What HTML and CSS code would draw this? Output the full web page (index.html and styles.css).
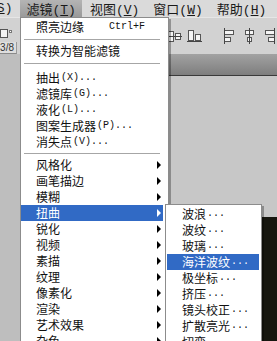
FILE: index.html
```html
<!DOCTYPE html>
<html lang="zh-CN">
  <head>
    <meta charset="UTF-8" />
    <title>滤镜菜单</title>
    <link rel="stylesheet" href="styles.css">
  </head>
  <body>
    <div class="app">
      <div class="menubar">
        <span class="mb-item mb-cut">(<u>S</u>)</span>
        <span class="mb-item active">滤镜<span class="key">(<u>T</u>)</span></span>
        <span class="mb-item">视图<span class="key">(<u>V</u>)</span></span>
        <span class="mb-item">窗口<span class="key">(<u>W</u>)</span></span>
        <span class="mb-item">帮助<span class="key">(<u>H</u>)</span></span>
      </div>

      <div class="toolbar">
        <div class="tb-left">
          <svg class="tb-mini" viewBox="0 0 12 10">
            <rect x="0.5" y="0.5" width="7" height="8" fill="#f2f2f2" stroke="#555" />
            <rect x="9.5" y="1.5" width="2" height="2" fill="#fff" stroke="#777" />
          </svg>
          <div class="field">3/8</div>
        </div>
        <div class="tb-right">
          <svg class="tb-icon" viewBox="0 0 15 16">
            <rect x="1.5" y="3.5" width="5" height="10" fill="#f4f4f4" stroke="#555" />
            <rect x="8.5" y="5.5" width="5" height="6" fill="#f4f4f4" stroke="#555" />
            <path d="M0 8.5h15" stroke="#444" />
          </svg>
          <svg class="tb-icon" viewBox="0 0 15 16">
            <rect x="1.5" y="2.5" width="5" height="10" fill="#f4f4f4" stroke="#555" />
            <rect x="8.5" y="6.5" width="5" height="6" fill="#f4f4f4" stroke="#555" />
            <path d="M0 13.5h15" stroke="#444" />
          </svg>
          <span class="tb-gap"></span>
          <svg class="tb-icon" viewBox="0 0 15 16">
            <rect x="2.5" y="2.5" width="9" height="4" fill="#f4f4f4" stroke="#555" />
            <rect x="2.5" y="9.5" width="6" height="4" fill="#f4f4f4" stroke="#555" />
            <path d="M2.5 0v16" stroke="#444" />
          </svg>
          <svg class="tb-icon" viewBox="0 0 15 16">
            <rect x="3.5" y="2.5" width="8" height="4" fill="#f4f4f4" stroke="#555" />
            <rect x="5.5" y="9.5" width="4" height="4" fill="#f4f4f4" stroke="#555" />
            <path d="M7.5 0v16" stroke="#444" />
          </svg>
          <svg class="tb-icon" viewBox="0 0 15 16">
            <rect x="3.5" y="2.5" width="9" height="4" fill="#f4f4f4" stroke="#555" />
            <rect x="6.5" y="9.5" width="6" height="4" fill="#f4f4f4" stroke="#555" />
            <path d="M12.5 0v16" stroke="#444" />
          </svg>
        </div>
      </div>

      <div class="workspace">
        <div class="side"></div>
        <div class="doc">
          <div class="doc-tabs"></div>
          <div class="doc-canvas"></div>
          <div class="doc-image"></div>
        </div>
      </div>

      <div class="menu">
        <div class="item">照亮边缘<span class="shortcut">Ctrl+F</span></div>
        <div class="sep"></div>
        <div class="item">转换为智能滤镜</div>
        <div class="sep sep-wide"></div>
        <div class="item">抽出 <span class="lat">(X)...</span></div>
        <div class="item">滤镜库 <span class="lat">(G)...</span></div>
        <div class="item">液化 <span class="lat">(L)...</span></div>
        <div class="item">图案生成器 <span class="lat">(P)...</span></div>
        <div class="item">消失点 <span class="lat">(V)...</span></div>
        <div class="sep sep-tight"></div>
        <div class="item">风格化<span class="arrow"></span></div>
        <div class="item">画笔描边<span class="arrow"></span></div>
        <div class="item">模糊<span class="arrow"></span></div>
        <div class="item selected">扭曲<span class="arrow"></span></div>
        <div class="item">锐化<span class="arrow"></span></div>
        <div class="item">视频<span class="arrow"></span></div>
        <div class="item">素描<span class="arrow"></span></div>
        <div class="item">纹理<span class="arrow"></span></div>
        <div class="item">像素化<span class="arrow"></span></div>
        <div class="item">渲染<span class="arrow"></span></div>
        <div class="item">艺术效果<span class="arrow"></span></div>
        <div class="item">杂色<span class="arrow"></span></div>
      </div>

      <div class="submenu">
        <div class="item">波浪<span class="lat">...</span></div>
        <div class="item">波纹<span class="lat">...</span></div>
        <div class="item">玻璃<span class="lat">...</span></div>
        <div class="item selected">海洋波纹<span class="lat">...</span></div>
        <div class="item">极坐标<span class="lat">...</span></div>
        <div class="item">挤压<span class="lat">...</span></div>
        <div class="item">镜头校正<span class="lat">...</span></div>
        <div class="item">扩散亮光<span class="lat">...</span></div>
        <div class="item">切变<span class="lat">...</span></div>
      </div>
    </div>
  </body>
</html>
```

FILE: styles.css
```css
* {
  margin: 0;
  padding: 0;
  box-sizing: border-box;
}

body {
  background: #c4c4c4;
  font-family: "Noto Sans CJK SC", "Noto Sans", sans-serif;
  color: #111;
}

.app {
  width: 277px;
  height: 341px;
  position: relative;
  overflow: hidden;
  display: flex;
  flex-direction: column;
}

/* menu bar */
.menubar {
  height: 17px;
  flex-shrink: 0;
  display: flex;
  gap: 2px;
  background: #dadada;
  font-size: 13px;
  line-height: 17px;
  color: #1a1a1a;
}

.mb-item {
  padding: 0 6px;
  white-space: nowrap;
}

.mb-cut {
  margin-left: -17px;
  font-family: "Liberation Mono", monospace;
}

.mb-item.active {
  background: linear-gradient(#b4b4b4, #9a9a9a);
}

.key {
  font-family: "Liberation Mono", monospace;
}

.key u,
.mb-cut u {
  text-decoration: underline;
}

/* options toolbar */
.toolbar {
  height: 37px;
  flex-shrink: 0;
  display: flex;
  background: #d2d2d2;
  border-top: 1px solid #e6e6e6;
}

.tb-left {
  width: 20px;
  display: flex;
  flex-direction: column;
  justify-content: flex-end;
  gap: 3px;
}

.tb-mini {
  width: 12px;
  height: 10px;
}

.field {
  height: 12px;
  background: #dedede;
  border-bottom: 1px solid #8a8a8a;
  border-right: 1px solid #9a9a9a;
  font-family: "Liberation Sans", sans-serif;
  font-size: 10px;
  line-height: 11px;
  text-align: right;
  padding-right: 2px;
  color: #333;
}

.tb-right {
  flex: 1;
  display: flex;
  align-items: center;
  gap: 5px;
  padding-left: 150px;
}

.tb-icon {
  width: 15px;
  height: 16px;
  flex-shrink: 0;
}

.tb-gap {
  width: 10px;
  flex-shrink: 0;
}

/* work area */
.workspace {
  flex: 1;
  display: flex;
}

.side {
  width: 20px;
  background: #bebebe;
}

.doc {
  flex: 1;
  display: flex;
  flex-direction: column;
}

.doc-tabs {
  height: 22px;
  background: linear-gradient(#a2a2a2, #7e7e7e);
  border-bottom: 1px solid #3a3a3a;
}

.doc-canvas {
  height: 141px;
  background: #c7c7c7;
}

.doc-image {
  flex: 1;
  background: #16160f;
}

/* dropdown menus */
.menu,
.submenu {
  position: absolute;
  background: #fff;
  border: 1px solid #8c8c8c;
  box-shadow: 2px 2px 0 rgba(0, 0, 0, 0.3);
  font-size: 12px;
  color: #111;
}

.menu {
  left: 20px;
  top: 17px;
  width: 149px;
  padding: 1px 5px 0 0;
}

.submenu {
  left: 165px;
  top: 204px;
  width: 97px;
  padding: 1px 2px 0 1px;
}

.item {
  height: 16px;
  display: flex;
  align-items: center;
  padding-left: 15px;
  white-space: nowrap;
  line-height: 16px;
}

.item.selected {
  background: #316ac5;
  color: #fff;
}

.lat,
.shortcut {
  font-family: "Liberation Mono", monospace;
  font-size: 10px;
}

.lat {
  margin-left: 1px;
}

.shortcut {
  margin-left: auto;
  margin-right: 18px;
}

.arrow {
  margin-left: auto;
  margin-right: 2px;
  width: 0;
  height: 0;
  border-left: 4px solid #000;
  border-top: 4px solid transparent;
  border-bottom: 4px solid transparent;
}

.selected .arrow {
  border-left-color: #fff;
}

.sep {
  height: 1px;
  background: #a6a6a6;
  margin: 4px 3px 3px;
}

.sep-wide {
  margin: 4px 3px 6px;
}

.sep-tight {
  margin: 3px 3px 3px;
}
```
